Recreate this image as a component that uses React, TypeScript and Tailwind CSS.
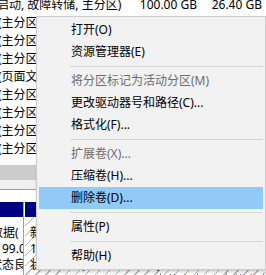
import { Fragment } from "react";

const rows = [
  "(主分区)",
  "(主分区)",
  "(主分区)",
  "(页面文件, 主分区)",
  "(主分区)",
  "(主分区)",
  "(主分区)",
  "(主分区)",
];

type Item = { label: string; disabled?: boolean; active?: boolean };

const menu: Item[][] = [
  [{ label: "打开(O)" }, { label: "资源管理器(E)" }],
  [
    { label: "将分区标记为活动分区(M)", disabled: true },
    { label: "更改驱动器号和路径(C)..." },
    { label: "格式化(F)..." },
  ],
  [
    { label: "扩展卷(X)...", disabled: true },
    { label: "压缩卷(H)..." },
    { label: "删除卷(D)...", active: true },
  ],
  [{ label: "属性(P)" }],
  [{ label: "帮助(H)" }],
];

function ContextMenu() {
  return (
    <div className="absolute left-[36px] top-[16px] w-[230px] border border-[#cccccc] bg-[#f2f2f2] p-[2px] shadow-[1px_2px_3px_rgba(0,0,0,0.2)]">
      {menu.map((group, gi) => (
        <Fragment key={gi}>
          {gi > 0 && (
            <div className="flex h-[7px] items-center pl-[31px]">
              <div className="h-px flex-1 bg-[#d5d5d5]" />
            </div>
          )}
          {group.map((item) => (
            <div
              key={item.label}
              className={`flex h-[22px] items-center whitespace-nowrap pl-[32px] text-[12px] leading-[22px] ${
                item.active ? "bg-[#91c9f7]" : ""
              } ${item.disabled ? "text-[#6d6d6d]" : "text-[#000000]"}`}
            >
              {item.label}
            </div>
          ))}
        </Fragment>
      ))}
    </div>
  );
}

export default function App() {
  return (
    <div className="relative h-[275px] w-[266px] overflow-hidden bg-white font-['Noto_Sans','Noto_Sans_CJK_SC',sans-serif] text-[12px] text-black">
      {/* volume list */}
      <div className="-mt-[4px] flex flex-col">
        <div className="flex h-[18px] items-center whitespace-nowrap leading-[18px]">
          <span className="-ml-[3px] w-[140px] shrink-0">启动, 故障转储, 主分区)</span>
          <span className="w-[60px] shrink-0 text-right">100.00 GB</span>
          <span className="w-[65px] shrink-0 text-right">26.40 GB</span>
        </div>
        {rows.map((r, i) => (
          <div key={i} className="flex h-[18px] items-center whitespace-nowrap leading-[18px]">
            <span className="-ml-[2px]">{r}</span>
          </div>
        ))}
      </div>

      <div className="h-[7px]" />
      <div className="h-[15px] bg-[#cdcdcd]" />
      <div className="h-[9px] bg-[#f0f0f0]" />
      <div className="h-px bg-[#a0a0a0]" />

      {/* disk map */}
      <div className="flex pt-[12px]">
        <div className="flex w-[23px] shrink-0 flex-col overflow-hidden">
          <div className="h-[15px] bg-[#000080]" />
          <div className="flex flex-col whitespace-nowrap pt-[8px] leading-[16px]">
            <span className="-ml-[9px]">数据(</span>
            <span className="ml-[2px]">99.00 GB</span>
            <span className="-ml-[10px]">状态良好</span>
          </div>
        </div>
        <div className="w-[2px] shrink-0 border-l border-[#a0a0a0] bg-white" />
        <div className="flex flex-1 flex-col overflow-hidden">
          <div className="h-[15px] bg-[#000080]" />
          <div className="flex h-[58px] flex-col whitespace-nowrap bg-[repeating-linear-gradient(135deg,#ffffff_0px,#ffffff_6px,#b4b4b4_6px,#b4b4b4_7px)] pl-[5px] pt-[8px] leading-[16px]">
            <span>新加卷 (D:)</span>
            <span>100.00 GB NTFS</span>
            <span>状态良好 (基本数据分区)</span>
            <div className="ml-[130px] flex h-[16px] gap-[28px] text-[#555]">
              <span className="border-x border-[#999] px-[6px]">状态</span>
              <span className="border-x border-[#999] px-[6px]">状态</span>
              <span className="border-x border-[#999] px-[6px]">状态</span>
            </div>
          </div>
        </div>
      </div>

      <ContextMenu />
    </div>
  );
}
